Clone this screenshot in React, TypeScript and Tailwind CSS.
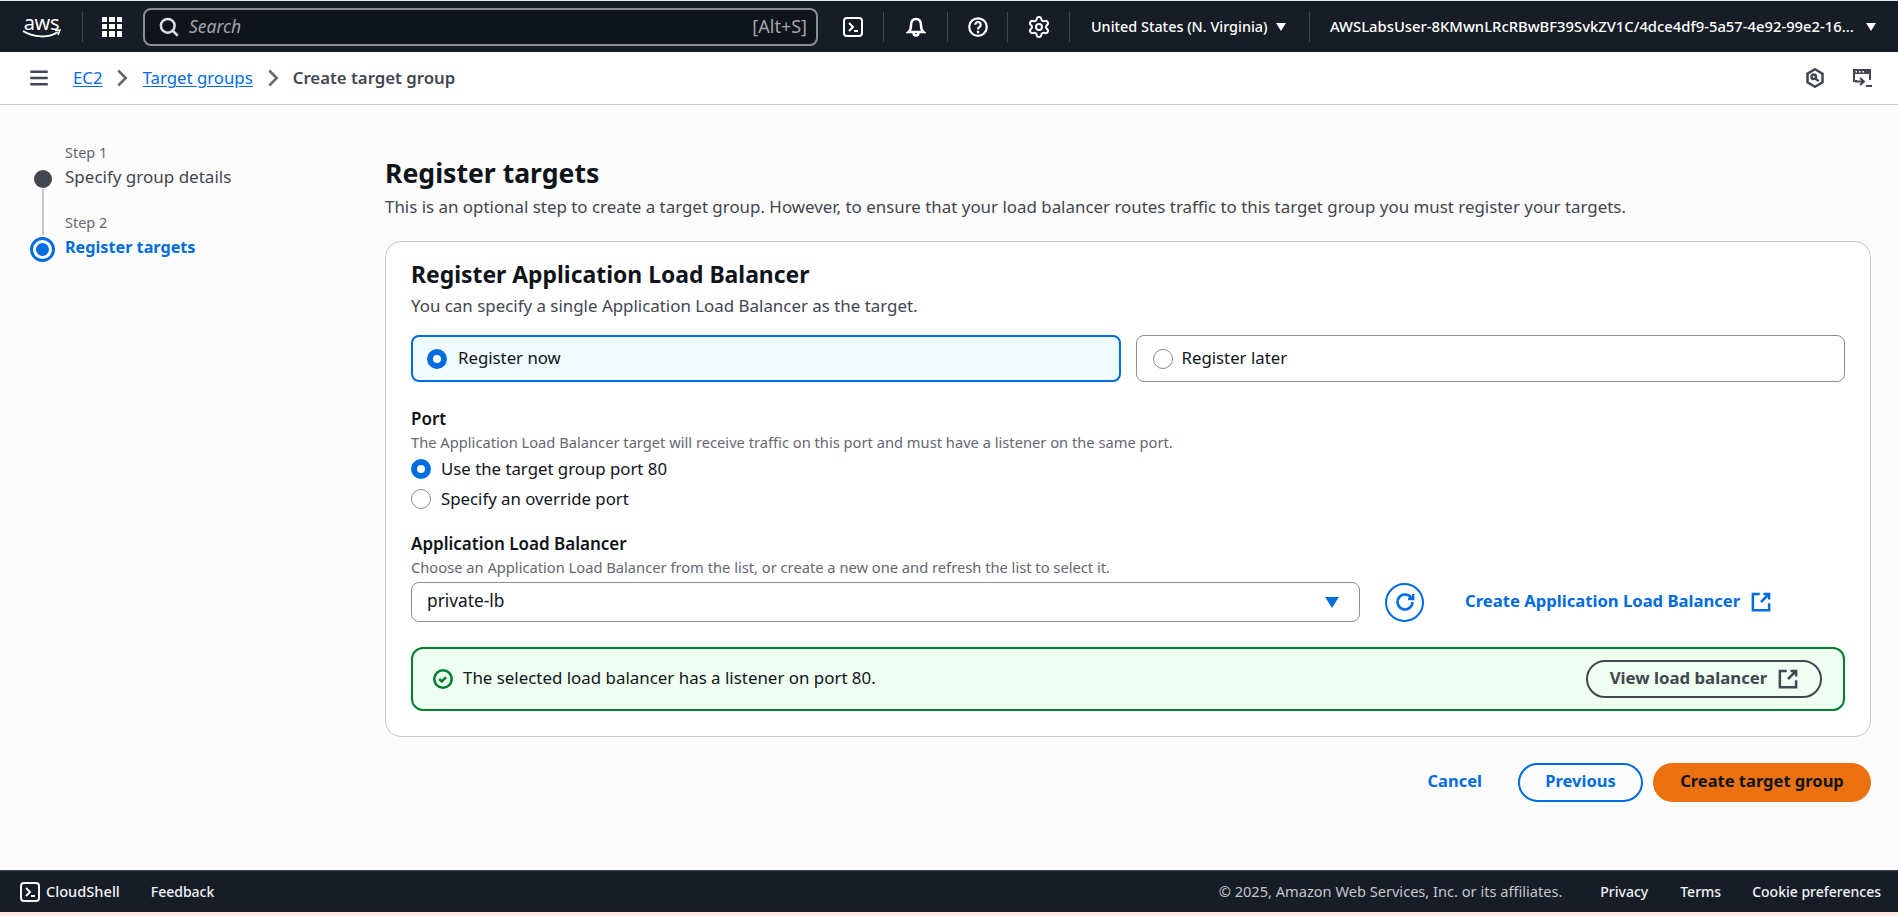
import { Settings } from "lucide-react";

const font = "font-['Noto_Sans',sans-serif]";

function Ico({ size = 16, sw = 2, className = "", children }: { size?: number; sw?: number; className?: string; children: React.ReactNode }) {
  return (
    <svg width={size} height={size} viewBox="0 0 16 16" fill="none" stroke="currentColor" strokeWidth={sw} className={`shrink-0 ${className}`}>
      {children}
    </svg>
  );
}

const External = ({ className = "" }: { className?: string }) => (
  <Ico size={20} className={className}>
    <path d="M14.500 9v5.500h-13v-13H7M10 1.500h4.500V6M14.500 1.500 8 8" />
  </Ico>
);

const Caret = ({ className = "" }: { className?: string }) => (
  <svg width="10" height="8" viewBox="0 0 10 8" className={`shrink-0 ${className}`} fill="currentColor">
    <path d="M0 0h10L5 8z" />
  </svg>
);

function Radio({ checked }: { checked?: boolean }) {
  return checked ? (
    <span className="w-[20px] h-[20px] rounded-full border-[6px] border-[#006ce0] bg-white shrink-0" />
  ) : (
    <span className="w-[20px] h-[20px] rounded-full border border-[#8c8c94] bg-white shrink-0" />
  );
}

function TopNav() {
  return (
    <div className="h-[52px] shrink-0 bg-[#161d26] border-t border-[#e9ebed] flex items-center text-white">
      <div className="w-[82px] shrink-0 flex flex-col items-center pl-[1px]">
        <span className="text-[20px] leading-[15px] tracking-[-0.3px]">aws</span>
        <svg width="40" height="10" viewBox="0 0 40 10" fill="none" className="-mt-[1px]">
          <path d="M1 2c11 7 26 7 35 1" stroke="white" strokeWidth="2" />
          <path d="M33 1.500 38 1l-2 5" stroke="white" strokeWidth="1.500" />
        </svg>
      </div>
      <div className="w-px h-[30px] bg-[#424650]" />
      <div className="ml-[19px] w-[20px] h-[20px] grid grid-cols-3 gap-[2px] shrink-0">
        {Array.from({ length: 9 }).map((_, i) => (
          <span key={i} className="bg-white" />
        ))}
      </div>
      <div className="ml-[21px] w-[675px] h-[38px] rounded-lg border-2 border-[#8c8c94] bg-[#0f141a] flex items-center pl-[14px] pr-[9px]">
        <Ico size={20} className="text-[#dedee3]">
          <circle cx="7" cy="7" r="5.500" />
          <path d="m15 15-4-4" />
        </Ico>
        <span className="ml-[10px] italic text-[#a4a4ad] text-[17.500px]">Search</span>
        <span className="ml-auto text-[#a4a4ad] text-[18px]">[Alt+S]</span>
      </div>
      <div className="ml-[25px] w-[20px] h-[20px] shrink-0 flex items-center justify-center rounded-[4px] border-2 border-white">
        <Ico size={16} sw={2}>
          <path d="m4 4 4 4-4 4M9 12h4" />
        </Ico>
      </div>
      <div className="ml-[20px] w-px h-[30px] bg-[#424650]" />
      <div className="w-[63px] flex justify-center">
        <Ico size={20}>
          <path d="M14 12H2c1.200-1 2-2.500 2-5.500C4 3.500 5.500 1.500 8 1.500s4 2 4 5c0 3 .8 4.500 2 5.500Z" />
          <path d="M6 12.500c0 3 4 3 4 0" />
        </Ico>
      </div>
      <div className="w-px h-[30px] bg-[#424650]" />
      <div className="w-[59px] flex justify-center">
        <Ico size={20} sw={1.800}>
          <circle cx="8" cy="8" r="7" />
          <path d="M5.800 6.200a2.200 2.200 0 1 1 3.400 1.800C8.400 8.500 8 9 8 10M8 11v2" />
        </Ico>
      </div>
      <div className="w-px h-[30px] bg-[#424650]" />
      <div className="w-[61px] flex justify-center">
        <Settings size={24} strokeWidth={2} />
      </div>
      <div className="w-px h-[30px] bg-[#424650]" />
      <span className="ml-[21px] w-[179px] text-[14.400px] font-medium whitespace-nowrap">United States (N. Virginia)</span>
      <Caret className="ml-[6px]" />
      <div className="ml-[23px] w-px h-[30px] bg-[#424650]" />
      <span className="ml-[20px] w-[536px] text-[14.800px] font-medium whitespace-nowrap">
        AWSLabsUser-8KMwnLRcRBwBF39SvkZV1C/4dce4df9-5a57-4e92-99e2-16...
      </span>
      <Caret />
    </div>
  );
}

function Breadcrumbs() {
  return (
    <div className="h-[53px] shrink-0 bg-white border-b border-[#c6c6cd] flex items-center pl-[29px] pr-[26px] text-[16.800px]">
      <Ico size={20} className="text-[#424650]">
        <path d="M15 3H1M15 8H1M15 13H1" />
      </Ico>
      <a className="ml-[24px] text-[#006ce0] underline underline-offset-2">EC2</a>
      <Ico size={20} className="ml-[9px] text-[#656871]"><path d="m5 2 6 6-6 6" /></Ico>
      <a className="ml-[11px] text-[#006ce0] underline underline-offset-2">Target groups</a>
      <Ico size={20} className="ml-[10px] text-[#656871]"><path d="m5 2 6 6-6 6" /></Ico>
      <span className="ml-[10px] font-semibold text-[#424650]">Create target group</span>
      <div className="ml-auto flex items-center gap-[27px] text-[#424650]">
        <Ico size={20}>
          <path d="M8 1 14 4.500v7L8 15 2 11.500v-7z" />
          <circle cx="7" cy="7" r="1.800" />
          <path d="m8.500 8.500 2.500 2" />
        </Ico>
        <svg width="20" height="20" viewBox="0 0 20 20" className="shrink-0">
          <path d="M1 1h18v5H1z" fill="currentColor" />
          <path d="M3.500 3h1.500v1.500H3.500zM7 3h1.500v1.500H7zM10.500 3h1.500v1.500h-1.500z" fill="white" />
          <path d="M2 5v8h3M18 5v7" fill="none" stroke="currentColor" strokeWidth="2" />
          <path d="m8 10 4 3.500L8 17M3 13.500h8M14 18h6" fill="none" stroke="currentColor" strokeWidth="2" />
        </svg>
      </div>
    </div>
  );
}

function Steps() {
  return (
    <div className="w-[385px] shrink-0 pl-[30px] pt-[37px] flex">
      <div className="w-[25px] flex flex-col items-center pt-[28px] shrink-0">
        <span className="w-[18px] h-[18px] rounded-full bg-[#424650]" />
        <span className="mt-[1px] w-[2px] h-[46px] bg-[#c6c6cd]" />
        <span className="mt-[2px] w-[25px] h-[25px] rounded-full border-[3px] border-[#006ce0] bg-white flex items-center justify-center">
          <span className="w-[13px] h-[13px] rounded-full bg-[#006ce0]" />
        </span>
      </div>
      <div className="ml-[10px]">
        <div className="text-[14.500px] leading-[20px] text-[#656871]">Step 1</div>
        <div className="mt-[1px] text-[17px] leading-[28px] text-[#424650]">Specify group details</div>
        <div className="mt-[21px] text-[14.500px] leading-[20px] text-[#656871]">Step 2</div>
        <div className="mt-[1px] text-[16.200px] leading-[28px] font-bold text-[#006ce0]">Register targets</div>
      </div>
    </div>
  );
}

function Card() {
  return (
    <div className="mt-[22px] h-[496px] rounded-[16px] border border-[#c6c6cd] bg-white pt-[17px] px-[25px]">
      <h2 className="text-[22.900px] leading-[32px] font-bold text-[#0f141a]">Register Application Load Balancer</h2>
      <p className="mt-[3px] text-[16.900px] leading-[24px] text-[#424650]">You can specify a single Application Load Balancer as the target.</p>

      <div className="mt-[17px] grid grid-cols-2 gap-[15px] text-[16.800px] text-[#0f141a]">
        <div className="h-[47px] rounded-lg border-2 border-[#006ce0] bg-[#f0fbff] flex items-center pl-[14px] gap-[11px]">
          <Radio checked />
          <span className="-mt-[2px]">Register now</span>
        </div>
        <div className="h-[47px] rounded-lg border border-[#8c8c94] bg-white flex items-center pl-[16px] gap-[9px]">
          <Radio />
          <span className="-mt-[2px]">Register later</span>
        </div>
      </div>

      <div className="mt-[25px] text-[17px] leading-[24px] font-semibold text-[#0f141a]">Port</div>
      <p className="mt-[2px] text-[14.700px] leading-[18px] text-[#656871]">The Application Load Balancer target will receive traffic on this port and must have a listener on the same port.</p>
      <div className="mt-[3px] flex items-center gap-[10px] h-[30px] text-[16.800px] text-[#0f141a]">
        <Radio checked />
        <span>Use the target group port 80</span>
      </div>
      <div className="flex items-center gap-[10px] h-[30px] text-[16.800px] text-[#0f141a]">
        <Radio />
        <span>Specify an override port</span>
      </div>

      <div className="mt-[18px] text-[17px] leading-[24px] font-semibold text-[#0f141a]">Application Load Balancer</div>
      <p className="mt-[2px] text-[14.700px] leading-[18px] text-[#656871]">Choose an Application Load Balancer from the list, or create a new one and refresh the list to select it.</p>
      <div className="mt-[6px] flex items-center">
        <div className="w-[949px] h-[40px] rounded-lg border border-[#8c8c94] bg-white flex items-center pl-[15px] pr-[20px] text-[17.300px] text-[#0f141a]">
          <span className="-mt-[2px]">private-lb</span>
          <Caret className="ml-auto text-[#006ce0] w-[14px] h-[11px]" />
        </div>
        <div className="ml-[25px] w-[39px] h-[39px] rounded-full border-2 border-[#006ce0] flex items-center justify-center text-[#006ce0]">
          <Ico size={20}>
            <path d="M10.500 5.500h4v-4" />
            <path d="M14 8a6 6 0 1 1-.800-3" />
          </Ico>
        </div>
        <a className="ml-[41px] -mt-[2px] text-[16.650px] font-bold text-[#006ce0] whitespace-nowrap">Create Application Load Balancer</a>
        <External className="ml-[11px] text-[#006ce0]" />
      </div>

      <div className="mt-[25px] h-[64px] rounded-[12px] border-2 border-[#00802f] bg-[#effff1] flex items-center pl-[20px] pr-[21px]">
        <Ico size={20} className="text-[#00802f]">
          <circle cx="8" cy="8" r="7" />
          <path d="m5 8 2 2 3.500-3.500" />
        </Ico>
        <span className="ml-[10px] -mt-[2px] text-[16.900px] text-[#0f141a]">The selected load balancer has a listener on port 80.</span>
        <div className="ml-auto w-[236px] h-[38px] rounded-full border-2 border-[#424650] flex items-center justify-center gap-[11px] text-[16.800px] font-bold text-[#424650]">
          <span className="-mt-[2px]">View load balancer</span>
          <External />
        </div>
      </div>
    </div>
  );
}

function Footer() {
  return (
    <div className="h-[42px] shrink-0 bg-[#161d26] border-t border-[#424650] flex items-center pl-[20px] pr-[17px] text-[14px] text-[#f3f3f7]">
      <div className="w-[20px] h-[20px] rounded-[4px] border-2 border-[#f3f3f7] flex items-center justify-center shrink-0">
        <Ico size={16}><path d="m4 4 4 4-4 4M9 12h4" /></Ico>
      </div>
      <span className="ml-[6px] font-medium text-[14.600px]">CloudShell</span>
      <span className="ml-[31px] font-medium">Feedback</span>
      <span className="ml-auto text-[#c6c6cd] text-[14.600px]">© 2025, Amazon Web Services, Inc. or its affiliates.</span>
      <span className="ml-[38px] font-medium">Privacy</span>
      <span className="ml-[32px] font-medium">Terms</span>
      <span className="ml-[31px] font-medium">Cookie preferences</span>
    </div>
  );
}

export default function App() {
  return (
    <div className={`h-[916px] w-[1898px] overflow-hidden flex flex-col bg-[#fcfcfc] ${font}`}>
      <TopNav />
      <Breadcrumbs />
      <div className="flex-1 flex min-h-0">
        <Steps />
        <div className="w-[1486px] pt-[50px]">
          <h1 className="text-[26.600px] leading-[36px] font-bold text-[#0f141a]">Register targets</h1>
          <p className="mt-[4px] text-[16.900px] leading-[24px] text-[#424650]">This is an optional step to create a target group. However, to ensure that your load balancer routes traffic to this target group you must register your targets.</p>
          <Card />
          <div className="mt-[26px] flex items-center justify-end text-[16.500px] font-bold">
            <a className="-mt-[2px] text-[#006ce0]">Cancel</a>
            <div className="ml-[36px] w-[125px] h-[39px] pb-[2px] rounded-full border-2 border-[#006ce0] flex items-center justify-center text-[#006ce0]">Previous</div>
            <div className="ml-[10px] w-[218px] h-[39px] pb-[2px] rounded-full bg-[#ec7211] flex items-center justify-center text-[#0f141a]">Create target group</div>
          </div>
        </div>
      </div>
      <Footer />
      <div className="h-[4px] shrink-0 bg-[#fbe9e3]" />
    </div>
  );
}
